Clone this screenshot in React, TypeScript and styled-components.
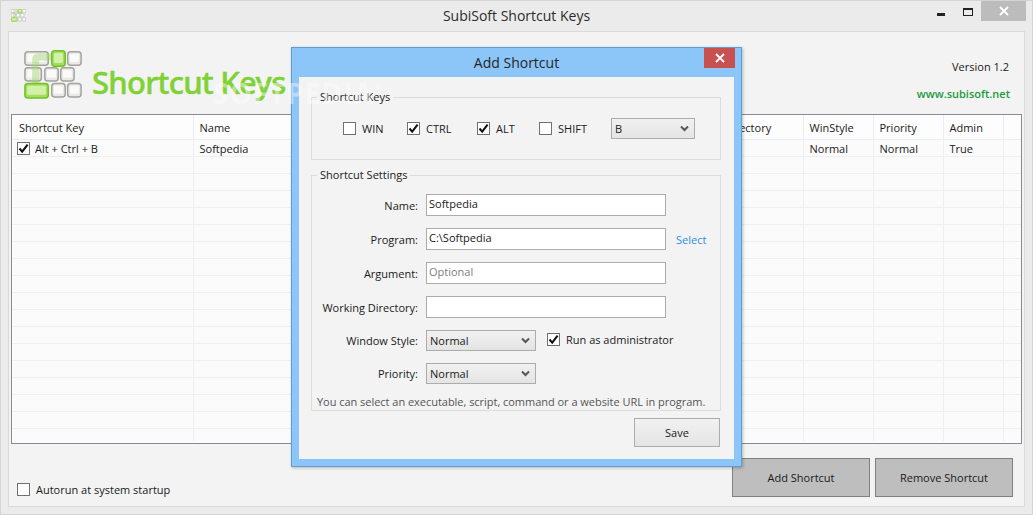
import React from 'react';
import styled, { createGlobalStyle } from 'styled-components';

const UI_FONT = '"Open Sans", "Noto Sans", sans-serif';

const GlobalStyle = createGlobalStyle`
  html, body {
    margin: 0;
    padding: 0;
    background: #ebebeb;
  }
  * {
    box-sizing: border-box;
  }
`;

const CheckIcon = () => (
  <svg width="11" height="11" viewBox="0 0 11 11">
    <path d="M1.5 5.5 L4.2 8.6 L9.6 1.6" fill="none" stroke="#111" strokeWidth="2" />
  </svg>
);

const ChevronIcon = () => (
  <svg width="9" height="7" viewBox="0 0 9 7">
    <path d="M1 1.5 L4.5 5 L8 1.5" fill="none" stroke="#555" strokeWidth="2" />
  </svg>
);

const CloseIcon = () => (
  <svg width="10" height="10" viewBox="0 0 10 10">
    <path d="M1 1 L9 9 M9 1 L1 9" fill="none" stroke="#fff" strokeWidth="1.8" />
  </svg>
);

const LogoKey = ({ x, y, w, h, green }: { x: number; y: number; w: number; h: number; green?: boolean }) => (
  <g>
    <rect
      x={x + 0.75}
      y={y + 0.75}
      width={w - 1.5}
      height={h - 1.5}
      rx="3"
      fill={green ? '#a5dc62' : '#e9e9e6'}
      stroke={green ? '#6fc41e' : '#a3a39f'}
      strokeWidth="1.5"
    />
    <rect x={x + 3} y={y + 3} width={w - 6} height={h - 7} rx="1.5" fill={green ? '#d3f0a9' : '#fafaf8'} />
  </g>
);

const LogoMark = ({ size }: { size: number }) => (
  <svg width={size} height={size * 0.84} viewBox="0 0 58 49">
    <LogoKey x={0} y={1} w={25} h={15} />
    <LogoKey x={43} y={1} w={15} h={15} />
    <LogoKey x={0} y={17} w={18} h={15} />
    <LogoKey x={20} y={17} w={15} h={15} />
    <LogoKey x={36} y={17} w={15} h={15} />
    <LogoKey x={27} y={33} w={15} h={15} />
    <LogoKey x={43} y={33} w={15} h={15} />
    <path d="M11.5 36 V10 Q11.5 7 14.5 7 H28" fill="none" stroke="#9fd56a" strokeOpacity="0.45" strokeWidth="7" />
    <LogoKey x={27} y={0} w={15} h={17} green />
    <LogoKey x={0} y={33} w={25} h={16} green />
  </svg>
);

const CheckBox = ({ checked }: { checked?: boolean }) => <Box>{checked && <CheckIcon />}</Box>;

const Combo = ({ value, wide }: { value: string; wide?: boolean }) => (
  <ComboBox $wide={wide}>
    <span>{value}</span>
    <ChevronIcon />
  </ComboBox>
);

// Program and Argument sit fully behind the dialog in this view
const COLUMNS = [
  { title: 'Shortcut Key', width: 181 },
  { title: 'Name', width: 160 },
  { title: '', width: 160 },
  { title: '', width: 159 },
  { title: 'Working Directory', width: 131 },
  { title: 'WinStyle', width: 70 },
  { title: 'Priority', width: 70 },
  { title: 'Admin', width: 60 },
  { title: '', width: 18 },
];

const FIRST_ROW = ['Alt + Ctrl + B', 'Softpedia', '', '', '', 'Normal', 'Normal', 'True', ''];
const EMPTY_ROWS = Array.from({ length: 16 }, (_, i) => i);

const App: React.FC = () => (
  <Window>
    <GlobalStyle />
    <TitleBar>
      <TitleIcon>
        <LogoMark size={15} />
      </TitleIcon>
      <TitleText>SubiSoft Shortcut Keys</TitleText>
      <WindowControls>
        <MinimizeButton />
        <MaximizeButton />
        <WindowClose>
          <CloseIcon />
        </WindowClose>
      </WindowControls>
    </TitleBar>

    <Client>
      <Header>
        <Logo>
          <LogoMark size={58} />
          <LogoText>Shortcut Keys</LogoText>
        </Logo>
        <AppInfo>
          <Version>Version 1.2</Version>
          <Website>www.subisoft.net</Website>
        </AppInfo>
      </Header>

      <TableFrame>
        <Table>
          <colgroup>
            {COLUMNS.map((c, i) => (
              <col key={i} style={{ width: c.width }} />
            ))}
          </colgroup>
          <thead>
            <tr>
              {COLUMNS.map((c, i) => (
                <HeadCell key={i}>{c.title}</HeadCell>
              ))}
            </tr>
          </thead>
          <tbody>
            <tr>
              {FIRST_ROW.map((text, i) => (
                <Cell key={i}>
                  {i === 0 ? (
                    <KeyCell>
                      <CheckBox checked />
                      {text}
                    </KeyCell>
                  ) : (
                    text
                  )}
                </Cell>
              ))}
            </tr>
            {EMPTY_ROWS.map(r => (
              <tr key={r}>
                {COLUMNS.map((_, i) => (
                  <Cell key={i} />
                ))}
              </tr>
            ))}
            <tr>
              {COLUMNS.map((_, i) => (
                <LastCell key={i} />
              ))}
            </tr>
          </tbody>
        </Table>
      </TableFrame>

      <Footer>
        <Autorun>
          <CheckBox />
          Autorun at system startup
        </Autorun>
        <FooterButtons>
          <GreyButton>Add Shortcut</GreyButton>
          <GreyButton>Remove Shortcut</GreyButton>
        </FooterButtons>
      </Footer>
    </Client>

    <Dialog>
      <DialogTitleBar>
        <DialogTitle>Add Shortcut</DialogTitle>
        <DialogClose>
          <CloseIcon />
        </DialogClose>
      </DialogTitleBar>
      <DialogBody>
        <Group>
          <Legend>Shortcut Keys</Legend>
          <KeyRow>
            <KeyOption>
              <CheckBox />
              WIN
            </KeyOption>
            <KeyOption>
              <CheckBox checked />
              CTRL
            </KeyOption>
            <KeyOption>
              <CheckBox checked />
              ALT
            </KeyOption>
            <KeyOption>
              <CheckBox />
              SHIFT
            </KeyOption>
            <Combo value="B" />
          </KeyRow>
        </Group>

        <SettingsGroup>
          <Legend>Shortcut Settings</Legend>
          <Fields>
            <FieldRow>
              <FieldLabel $low>Name:</FieldLabel>
              <TextInput readOnly value="Softpedia" />
            </FieldRow>
            <FieldRow>
              <FieldLabel $low>Program:</FieldLabel>
              <TextInput readOnly value="C:\Softpedia" />
              <SelectLink>Select</SelectLink>
            </FieldRow>
            <FieldRow>
              <FieldLabel $low>Argument:</FieldLabel>
              <TextInput readOnly placeholder="Optional" />
            </FieldRow>
            <FieldRow>
              <FieldLabel $low>Working Directory:</FieldLabel>
              <TextInput readOnly />
            </FieldRow>
            <FieldRow>
              <FieldLabel>Window Style:</FieldLabel>
              <Combo value="Normal" wide />
              <AdminOption>
                <CheckBox checked />
                Run as administrator
              </AdminOption>
            </FieldRow>
            <PriorityRow>
              <FieldLabel>Priority:</FieldLabel>
              <Combo value="Normal" wide />
            </PriorityRow>
          </Fields>
          <HelpText>You can select an executable, script, command or a website URL in program.</HelpText>
        </SettingsGroup>

        <DialogActions>
          <SaveButton>Save</SaveButton>
        </DialogActions>
      </DialogBody>
    </Dialog>

    <Watermark>
      SOFTPEDIA<sup>®</sup>
    </Watermark>
  </Window>
);

const Window = styled.div`
  position: relative;
  width: 1033px;
  height: 515px;
  overflow: hidden;
  display: flex;
  flex-direction: column;
  background: #ebebeb;
  border: 1px solid #d4d4d4;
  font-family: ${UI_FONT};
  font-size: 11px;
  color: #1a1a1a;
`;

const TitleBar = styled.div`
  position: relative;
  height: 30px;
  flex: none;
  display: flex;
  align-items: flex-start;
  justify-content: space-between;
`;

const TitleIcon = styled.div`
  margin: 8px 0 0 10px;
  line-height: 0;
`;

const TitleText = styled.div`
  position: absolute;
  left: 0;
  right: 0;
  top: 4px;
  text-align: center;
  font-size: 14px;
  line-height: 22px;
  color: #2b2b2b;
`;

const WindowControls = styled.div`
  display: flex;
  align-items: flex-start;
  margin-right: 6px;
`;

const MinimizeButton = styled.div`
  width: 8px;
  height: 3px;
  margin: 12px 18px 0 0;
  background: #222;
`;

const MaximizeButton = styled.div`
  width: 10px;
  height: 8px;
  margin: 7px 8px 0 0;
  border: 1px solid #222;
  border-top-width: 2px;
`;

const WindowClose = styled.div`
  width: 45px;
  height: 20px;
  background: #bcbcbc;
  display: flex;
  align-items: center;
  justify-content: center;
`;

const Client = styled.div`
  flex: 1;
  margin: 0 7px 7px;
  display: flex;
  flex-direction: column;
  background: #f3f3f3;
  border: 1px solid #dadada;
  padding: 0 2px;
`;

const Header = styled.div`
  height: 82px;
  flex: none;
  display: flex;
  justify-content: space-between;
`;

const Logo = styled.div`
  display: flex;
  align-items: flex-start;
  padding: 18px 0 0 13px;
`;

const LogoText = styled.div`
  margin: 12px 0 0 10px;
  font-family: "Noto Sans", sans-serif;
  font-size: 31px;
  line-height: 40px;
  font-weight: 500;
  letter-spacing: -0.75px;
  color: #7fd234;
  -webkit-text-stroke: 0.5px #7fd234;
  white-space: nowrap;
`;

const AppInfo = styled.div`
  display: flex;
  flex-direction: column;
  align-items: flex-end;
  padding: 27px 12px 0 0;
  gap: 11px;
`;

const Version = styled.div`
  margin-right: 1px;
  line-height: 16px;
`;

const Website = styled.div`
  line-height: 16px;
  font-weight: 600;
  color: #1c9a3c;
`;

const TableFrame = styled.div`
  height: 330px;
  flex: none;
  overflow: hidden;
  background: #fbfbfb;
  border: 1px solid #8a8a90;
`;

const Table = styled.table`
  width: 1009px;
  table-layout: fixed;
  border-collapse: collapse;
`;

const HeadCell = styled.th`
  height: 24px;
  padding: 2px 6px 0;
  text-align: left;
  font-weight: 400;
  white-space: nowrap;
  background: #fdfdfd;
  border-right: 1px solid #e5edf8;
  border-bottom: 1px solid #e5edf8;

  &:first-child {
    padding-left: 7px;
  }
`;

const Cell = styled.td`
  height: 17px;
  padding: 1px 6px 0;
  line-height: 15px;
  white-space: nowrap;
  border-right: 1px solid #efefef;
  border-bottom: 1px solid #efefef;

  &:first-child {
    padding-left: 7px;
  }
`;

const LastCell = styled(Cell)`
  height: 13px;
  border-bottom: 0;
`;

const KeyCell = styled.div`
  display: flex;
  align-items: center;
  gap: 5px;
  margin-left: -2px;
`;

const Box = styled.span`
  width: 13px;
  height: 13px;
  flex: none;
  display: inline-flex;
  align-items: center;
  justify-content: center;
  background: #fff;
  border: 1px solid #707070;
`;

const Footer = styled.div`
  flex: 1;
  display: flex;
  justify-content: space-between;
  padding: 14px 9px 0 6px;
`;

const Autorun = styled.label`
  display: flex;
  align-items: center;
  gap: 6px;
  height: 13px;
  margin-top: 25px;
`;

const FooterButtons = styled.div`
  display: flex;
  gap: 5px;
`;

const GreyButton = styled.button`
  width: 138px;
  height: 39px;
  padding: 0;
  font-family: ${UI_FONT};
  font-size: 11px;
  color: #1a1a1a;
  background: #bebebe;
  border: 1px solid #808080;
`;

const Dialog = styled.div`
  position: absolute;
  left: 290px;
  top: 46px;
  width: 451px;
  height: 420px;
  display: flex;
  flex-direction: column;
  background: #8cc5f8;
  border: 1px solid #5f9fd0;
  box-shadow: 1px 1px 3px rgba(0, 0, 0, 0.25);
`;

const DialogTitleBar = styled.div`
  position: relative;
  height: 29px;
  flex: none;
`;

const DialogTitle = styled.div`
  text-align: center;
  font-size: 14px;
  line-height: 29px;
  color: #262626;
`;

const DialogClose = styled.div`
  position: absolute;
  top: 0;
  right: 6px;
  width: 31px;
  height: 20px;
  display: flex;
  align-items: center;
  justify-content: center;
  background: #c75050;
`;

const DialogBody = styled.div`
  flex: 1;
  margin: 0 7px 7px;
  padding: 12px 12px 0;
  background: #f3f3f3;
`;

const Group = styled.fieldset`
  margin: 0;
  padding: 13px 0 0;
  width: 410px;
  height: 71px;
  border: 1px solid #dcdcdc;
`;

const SettingsGroup = styled(Group)`
  height: 244px;
  margin-top: 7px;
  padding-top: 10px;
`;

const Legend = styled.legend`
  margin-left: 5px;
  padding: 0 3px;
  line-height: 16px;
`;

const KeyRow = styled.div`
  display: grid;
  grid-template-columns: 64px 70px 62px 72px 84px;
  align-items: center;
  padding-left: 31px;
`;

const KeyOption = styled.label`
  display: flex;
  align-items: center;
  gap: 6px;
`;

const ComboBox = styled.div<{ $wide?: boolean }>`
  width: ${p => (p.$wide ? '110px' : '84px')};
  height: 21px;
  display: flex;
  align-items: center;
  justify-content: space-between;
  padding: 0 5px 0 3px;
  background: linear-gradient(#f1f1f1, #e4e4e4);
  border: 1px solid #acacac;
`;

const Fields = styled.div`
  display: flex;
  flex-direction: column;
  gap: 11px;
`;

const FieldRow = styled.div`
  height: 23px;
  display: flex;
  align-items: center;
`;

const PriorityRow = styled(FieldRow)`
  margin: -1px 0 1px;
`;

const FieldLabel = styled.label<{ $low?: boolean }>`
  width: 106px;
  margin-right: 8px;
  padding-top: ${p => (p.$low ? '2px' : '0')};
  text-align: right;
  white-space: nowrap;
`;

const TextInput = styled.input`
  width: 240px;
  height: 22px;
  align-self: flex-end;
  padding: 0 2px 3px;
  font-family: ${UI_FONT};
  font-size: 11px;
  color: #1a1a1a;
  background: #fff;
  border: 1px solid #acacac;
  outline: none;

  &::placeholder {
    color: #808080;
  }
`;

const SelectLink = styled.a`
  margin: 1px 0 0 10px;
  color: #2b8fe0;
`;

const AdminOption = styled.label`
  display: flex;
  align-items: center;
  gap: 6px;
  margin: -2px 0 0 11px;
`;

const HelpText = styled.div`
  margin: 8px 0 0 5px;
  line-height: 16px;
  letter-spacing: -0.03px;
  color: #555;
  white-space: nowrap;
`;

const DialogActions = styled.div`
  display: flex;
  justify-content: flex-end;
  padding: 7px 2px 0 0;
`;

const SaveButton = styled.button`
  width: 86px;
  height: 29px;
  padding: 0;
  font-family: ${UI_FONT};
  font-size: 11px;
  color: #1a1a1a;
  background: linear-gradient(#f1f1f1, #e4e4e4);
  border: 1px solid #acacac;
`;

const Watermark = styled.div`
  position: absolute;
  left: 212px;
  top: 75px;
  font-size: 28px;
  line-height: 34px;
  font-weight: 700;
  letter-spacing: 1px;
  color: rgba(255, 255, 255, 0.42);
  white-space: nowrap;
  pointer-events: none;

  sup {
    font-size: 9px;
    font-weight: 400;
    vertical-align: 14px;
    line-height: 0;
  }
`;

export default App;
